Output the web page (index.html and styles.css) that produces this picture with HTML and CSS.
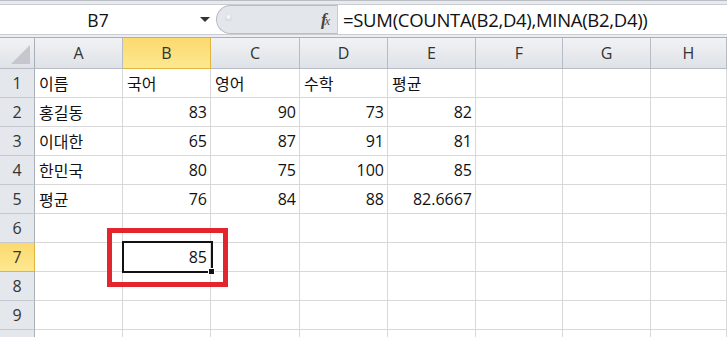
FILE: index.html
```html
<!DOCTYPE html>
<html>
<head>
<meta charset="utf-8">
<link rel="stylesheet" href="styles.css">
</head>
<body>
<div class="app">
  <div class="topstrip"></div>
  <div class="fbar">
    <div class="namebox"><span class="nb-text">B7</span><span class="nb-arrow"></span></div>
    <div class="pill"><span class="dot"></span><span class="fx"><i>f</i><i class="x">x</i></span></div>
    <div class="formula">=SUM(COUNTA(B2,D4),MINA(B2,D4))</div>
  </div>
  <div class="gap"></div>
  <div class="sheet">
    <div class="grid">
      <div class="ch corner"><span class="tri"></span></div>
      <div class="ch">A</div><div class="ch sel">B</div><div class="ch">C</div><div class="ch">D</div><div class="ch">E</div><div class="ch">F</div><div class="ch">G</div><div class="ch">H</div>

      <div class="rh">1</div><div class="c">이름</div><div class="c">국어</div><div class="c">영어</div><div class="c">수학</div><div class="c">평균</div><div class="c"></div><div class="c"></div><div class="c"></div>
      <div class="rh">2</div><div class="c">홍길동</div><div class="c n">83</div><div class="c n">90</div><div class="c n">73</div><div class="c n">82</div><div class="c"></div><div class="c"></div><div class="c"></div>
      <div class="rh">3</div><div class="c">이대한</div><div class="c n">65</div><div class="c n">87</div><div class="c n">91</div><div class="c n">81</div><div class="c"></div><div class="c"></div><div class="c"></div>
      <div class="rh">4</div><div class="c">한민국</div><div class="c n">80</div><div class="c n">75</div><div class="c n">100</div><div class="c n">85</div><div class="c"></div><div class="c"></div><div class="c"></div>
      <div class="rh">5</div><div class="c">평균</div><div class="c n">76</div><div class="c n">84</div><div class="c n">88</div><div class="c n">82.6667</div><div class="c"></div><div class="c"></div><div class="c"></div>
      <div class="rh">6</div><div class="c"></div><div class="c"></div><div class="c"></div><div class="c"></div><div class="c"></div><div class="c"></div><div class="c"></div><div class="c"></div>
      <div class="rh sel">7</div><div class="c"></div><div class="c n">85</div><div class="c"></div><div class="c"></div><div class="c"></div><div class="c"></div><div class="c"></div><div class="c"></div>
      <div class="rh">8</div><div class="c"></div><div class="c"></div><div class="c"></div><div class="c"></div><div class="c"></div><div class="c"></div><div class="c"></div><div class="c"></div>
      <div class="rh">9</div><div class="c"></div><div class="c"></div><div class="c"></div><div class="c"></div><div class="c"></div><div class="c"></div><div class="c"></div><div class="c"></div>
      <div class="rh"></div><div class="c"></div><div class="c"></div><div class="c"></div><div class="c"></div><div class="c"></div><div class="c"></div><div class="c"></div><div class="c"></div>
    </div>
    <div class="selbox"><span class="handle"></span></div>
    <div class="redbox"></div>
  </div>
</div>
</body>
</html>
```
FILE: styles.css
```css
html, body {
  margin: 0;
  padding: 0;
  background: #fff;
}
.app {
  width: 727px;
  height: 337px;
  overflow: hidden;
  font-family: "Noto Sans CJK KR", "Open Sans", sans-serif;
  color: #111;
}
.topstrip {
  height: 4px;
  background: #e8eaee;
  border-top: 1px solid #b9bdc4;
  box-sizing: border-box;
}
.fbar {
  height: 30px;
  display: flex;
  align-items: stretch;
  background: #fff;
  border-top: 1px solid #c9ccd1;
  box-sizing: border-box;
}
.namebox {
  width: 216px;
  display: flex;
  align-items: center;
  position: relative;
  font-family: "Open Sans", sans-serif;
  font-size: 17.5px;
}
.nb-text {
  flex: 1;
  text-align: center;
  margin-left: 8px;
  margin-right: 12px;
}
.nb-arrow {
  width: 0;
  height: 0;
  border-left: 5px solid transparent;
  border-right: 5px solid transparent;
  border-top: 5px solid #333;
  margin-right: 6px;
}
.pill {
  width: 121px;
  background: #e3e6eb;
  border: 1px solid #b9bdc4;
  border-right: none;
  border-radius: 15px 0 0 15px;
  display: flex;
  align-items: center;
  justify-content: space-between;
  padding: 0 9px 0 8px;
  box-sizing: border-box;
}
.dot {
  width: 7px;
  height: 7px;
  border-radius: 50%;
  background: radial-gradient(circle at 50% 40%, #fff, #c2c6cc);
  margin-top: -4px;
}
.fx {
  font-family: "Liberation Serif", serif;
  font-size: 17px;
  color: #444;
  font-weight: bold;
  letter-spacing: -2px;
}
.fx .x { font-size: 12px; font-weight: normal; }
.formula {
  flex: 1;
  border-left: 1px solid #c9ccd1;
  padding-left: 5px;
  font-family: "Open Sans", sans-serif;
  font-size: 18.5px;
  display: flex;
  align-items: center;
  letter-spacing: -0.3px;
}
.gap {
  height: 4px;
  background: #eceef1;
  border-top: 1px solid #c9ccd1;
  border-bottom: 1px solid #a9afb7;
  box-sizing: border-box;
}
.sheet {
  position: relative;
}
.grid {
  display: grid;
  grid-template-columns: 35px 88px 88px 89px 88px 88px 87px 88px 1fr;
  grid-auto-rows: 29px;
  grid-template-rows: 31px;
}
.ch, .rh {
  background: linear-gradient(#f1f2f4, #dfe2e7);
  border-right: 1px solid #b6bcc5;
  border-bottom: 1px solid #b6bcc5;
  display: flex;
  align-items: center;
  justify-content: center;
  font-family: "Open Sans", sans-serif;
  font-size: 16px;
  color: #333;
}
.rh {
  background: #e4e7ec;
  border-right: 1px solid #a9afb7;
  border-bottom: 1px solid #c4c9d0;
}
.ch.sel, .rh.sel {
  background: linear-gradient(#fbd96f, #fde88f);
  border-color: #e0b53f;
}
.corner {
  position: relative;
  border-right: 1px solid #a9afb7;
}
.tri {
  position: absolute;
  right: 4px;
  bottom: 4px;
  width: 0;
  height: 0;
  border-left: 19px solid transparent;
  border-bottom: 19px solid #c4c8ce;
}
.c {
  border-right: 1px solid #d8d8d8;
  border-bottom: 1px solid #d8d8d8;
  display: flex;
  align-items: center;
  padding: 0 4px;
  font-size: 16px;
  white-space: nowrap;
  overflow: visible;
}
.c.n {
  justify-content: flex-end;
  font-family: "Open Sans", sans-serif;
  padding-right: 3px;
}
.selbox {
  position: absolute;
  left: 122px;
  top: 203px;
  width: 91px;
  height: 32px;
  border: 2px solid #111;
  box-sizing: border-box;
}
.handle {
  position: absolute;
  right: -4px;
  bottom: -4px;
  width: 5px;
  height: 5px;
  background: #111;
  border: 1px solid #fff;
}
.redbox {
  position: absolute;
  left: 107px;
  top: 190px;
  width: 121px;
  height: 59px;
  border: 5px solid #e3262e;
  box-sizing: border-box;
}
```
